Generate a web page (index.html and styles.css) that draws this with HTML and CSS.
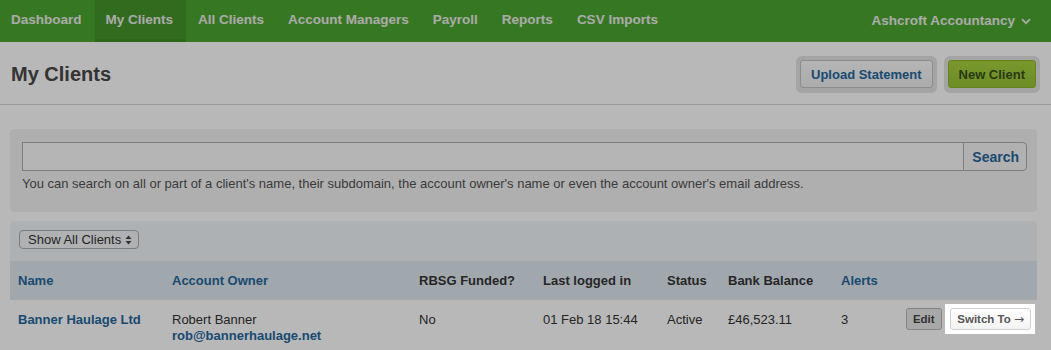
FILE: index.html
```html
<!DOCTYPE html>
<html lang="en">
<head>
<meta charset="utf-8">
<title>My Clients</title>
<link rel="stylesheet" href="styles.css">
</head>
<body>
<nav class="topnav">
  <ul class="nav-links">
    <li><a href="#">Dashboard</a></li>
    <li class="active"><a href="#">My Clients</a></li>
    <li><a href="#">All Clients</a></li>
    <li><a href="#">Account Managers</a></li>
    <li><a href="#">Payroll</a></li>
    <li><a href="#">Reports</a></li>
    <li><a href="#">CSV Imports</a></li>
  </ul>
  <div class="account">Ashcroft Accountancy
    <svg class="chev" width="10" height="7" viewBox="0 0 10 7"><path d="M1 1.2 L5 5.2 L9 1.2" fill="none" stroke="currentColor" stroke-width="1.8"/></svg>
  </div>
</nav>

<header class="page-head">
  <h1>My Clients</h1>
  <div class="head-actions">
    <span class="btn-ring"><a class="btn btn-default" href="#">Upload Statement</a></span>
    <span class="btn-ring"><a class="btn btn-green" href="#">New Client</a></span>
  </div>
</header>

<main class="content">
  <section class="panel search-panel">
    <form class="search-row">
      <input class="search-input" type="text">
      <button class="search-btn" type="button">Search</button>
    </form>
    <p class="help">You can search on all or part of a client's name, their subdomain, the account owner's name or even the account owner's email address.</p>
  </section>

  <section class="panel clients-panel">
    <div class="toolbar">
      <span class="select">Show All Clients
        <svg width="7" height="10" viewBox="0 0 7 10"><path d="M3.5 0.5 L6.5 4 L0.5 4 Z M3.5 9.5 L6.5 6 L0.5 6 Z" fill="#444"/></svg>
      </span>
    </div>
    <table class="clients">
      <colgroup>
        <col class="c-name"><col class="c-owner"><col class="c-rbsg"><col class="c-last"><col class="c-status"><col class="c-bank"><col class="c-alerts"><col>
      </colgroup>
      <thead>
        <tr>
          <th class="link">Name</th>
          <th class="link">Account Owner</th>
          <th>RBSG Funded?</th>
          <th>Last logged in</th>
          <th>Status</th>
          <th>Bank Balance</th>
          <th class="link">Alerts</th>
          <th></th>
        </tr>
      </thead>
      <tbody>
        <tr>
          <td><a class="strong-link" href="#">Banner Haulage Ltd</a></td>
          <td>Robert Banner<br><a class="strong-link" href="#">rob@bannerhaulage.net</a></td>
          <td>No</td>
          <td>01 Feb 18 15:44</td>
          <td>Active</td>
          <td>£46,523.11</td>
          <td>3</td>
          <td class="row-actions">
            <a class="sm-btn edit" href="#">Edit</a>
            <span class="spotlight"><a class="sm-btn switch" href="#">Switch To <span class="arrow">→</span></a></span>
          </td>
        </tr>
      </tbody>
    </table>
  </section>
</main>
</body>
</html>
```

FILE: styles.css
```css
html, body {
  margin: 0;
  padding: 0;
  overflow: hidden;
}
body {
  background: #fff;
  font-family: "Liberation Sans", Arial, sans-serif;
  font-size: 13px;
  color: #333;
}
a { text-decoration: none; color: inherit; }

/* nav */
.topnav {
  height: 42px;
  background: #4ca62f;
  display: flex;
  align-items: stretch;
  justify-content: space-between;
}
.nav-links {
  list-style: none;
  margin: 0;
  padding: 0;
  display: flex;
}
.nav-links li {
  display: flex;
}
.nav-links a {
  display: flex;
  align-items: center;
  padding: 0 12px 1px 11px;
  color: #ececec;
  font-weight: bold;
  font-size: 13.5px;
  border-bottom: 3px solid transparent;
  margin-right: 1px;
}
.nav-links li.active a {
  background: #43952a;
  border-bottom-color: #3f8d27;
  padding-right: 13px;
}
.account {
  display: flex;
  align-items: center;
  gap: 6px;
  color: #ececec;
  font-weight: bold;
  font-size: 13.5px;
  padding: 0 20px 1px 0;
}
.chev { margin-top: 2px; }

/* page head */
.page-head {
  height: 62px;
  display: flex;
  align-items: center;
  justify-content: space-between;
  padding: 0 11px;
  border-bottom: 1px solid #d4d4d4;
}
.page-head h1 {
  margin: 0;
  font-size: 20px;
  color: #484848;
  padding-top: 3px;
}
.head-actions {
  display: flex;
  gap: 7px;
  padding-top: 3px;
}
.btn-ring {
  display: inline-flex;
  padding: 4px 4px 5px 4px;
  border-radius: 6px;
  background: #e3e3e3;
}
.btn {
  display: inline-block;
  height: 26px;
  line-height: 27px;
  padding: 0 10px;
  border-radius: 3px;
  font-weight: bold;
  font-size: 13px;
}
.btn-default {
  background: linear-gradient(#fbfbfb, #eeeeee);
  border: 1px solid #c3c3c3;
  color: #24679c;
}
.btn-green {
  background: linear-gradient(#a8d23e, #98c534);
  border: 1px solid #8ab72f;
  color: #3a4f1c;
}

/* content */
.content {
  padding: 24px 14px 0 10px;
}
.panel {
  border-radius: 4px;
}
.search-panel {
  background: #f3f3f3;
  padding: 13px 10px 20px 12px;
}
.search-row {
  display: flex;
  margin: 0;
}
.search-input {
  flex: 1;
  height: 29px;
  box-sizing: border-box;
  border: 1px solid #a9afb6;
  border-right: none;
  background: #fbfbfb;
  margin: 0;
  padding: 0 6px;
}
.search-btn {
  height: 29px;
  box-sizing: border-box;
  border: 1px solid #a9afb6;
  border-radius: 0 4px 4px 0;
  background: #f6f6f6;
  color: #24679c;
  font-family: "Liberation Sans", Arial, sans-serif;
  font-weight: bold;
  font-size: 14px;
  padding: 0 7px 0 8px;
  margin: 0;
}
.help {
  margin: 5px 0 0 0;
  line-height: 16px;
  font-size: 13px;
  color: #525252;
}

.clients-panel {
  margin-top: 9px;
  background: #f1f5f8;
  border-radius: 4px 4px 0 0;
}
.toolbar {
  padding: 9px 9px 12px 9px;
}
.select {
  display: inline-flex;
  align-items: center;
  gap: 4px;
  height: 19px;
  box-sizing: border-box;
  padding: 0 6px 0 8px;
  border: 1px solid #a9adb1;
  border-radius: 4px;
  background: #f4f6f8;
  color: #333;
  font-size: 13px;
}

.clients {
  width: 100%;
  border-collapse: collapse;
  table-layout: fixed;
}
.c-name { width: 154px; }
.c-owner { width: 247px; }
.c-rbsg { width: 124px; }
.c-last { width: 124px; }
.c-status { width: 61px; }
.c-bank { width: 113px; }
.c-alerts { width: 60px; }
.clients th {
  background: #e0e9f0;
  height: 39px;
  padding: 0 0 0 8px;
  text-align: left;
  font-weight: bold;
  font-size: 13px;
  color: #353535;
}
.clients th.link { color: #24679c; }
.clients td {
  background: #fff;
  vertical-align: top;
  padding: 12px 0 0 8px;
  line-height: 16px;
  height: 38px;
  color: #333;
}
.strong-link {
  color: #24679c;
  font-weight: bold;
}
.clients td.row-actions {
  text-align: right;
  padding: 8px 6px 0 0;
  white-space: nowrap;
}
.sm-btn {
  display: inline-block;
  height: 22px;
  line-height: 21px;
  box-sizing: border-box;
  padding: 0 6px;
  border-radius: 3px;
  font-weight: bold;
  font-size: 11.5px;
  vertical-align: top;
}
.edit {
  background: #e9e9e9;
  border: 1px solid #b8b8b8;
  color: #444;
  margin-right: 0;
}
.spotlight {
  position: relative;
  z-index: 10;
  display: inline-block;
  padding: 4px 4px 4px 5px;
  margin: -4px -4px 0 0;
  background: #fff;
  box-shadow: 0 0 0 3000px rgba(0, 0, 0, 0.28);
  vertical-align: top;
}
.switch {
  background: linear-gradient(#ffffff, #f3f3f3);
  border: 1px solid #cfcfcf;
  color: #555;
}
.arrow {
  font-family: "DejaVu Sans", sans-serif;
  font-weight: normal;
  font-size: 12px;
}
```
